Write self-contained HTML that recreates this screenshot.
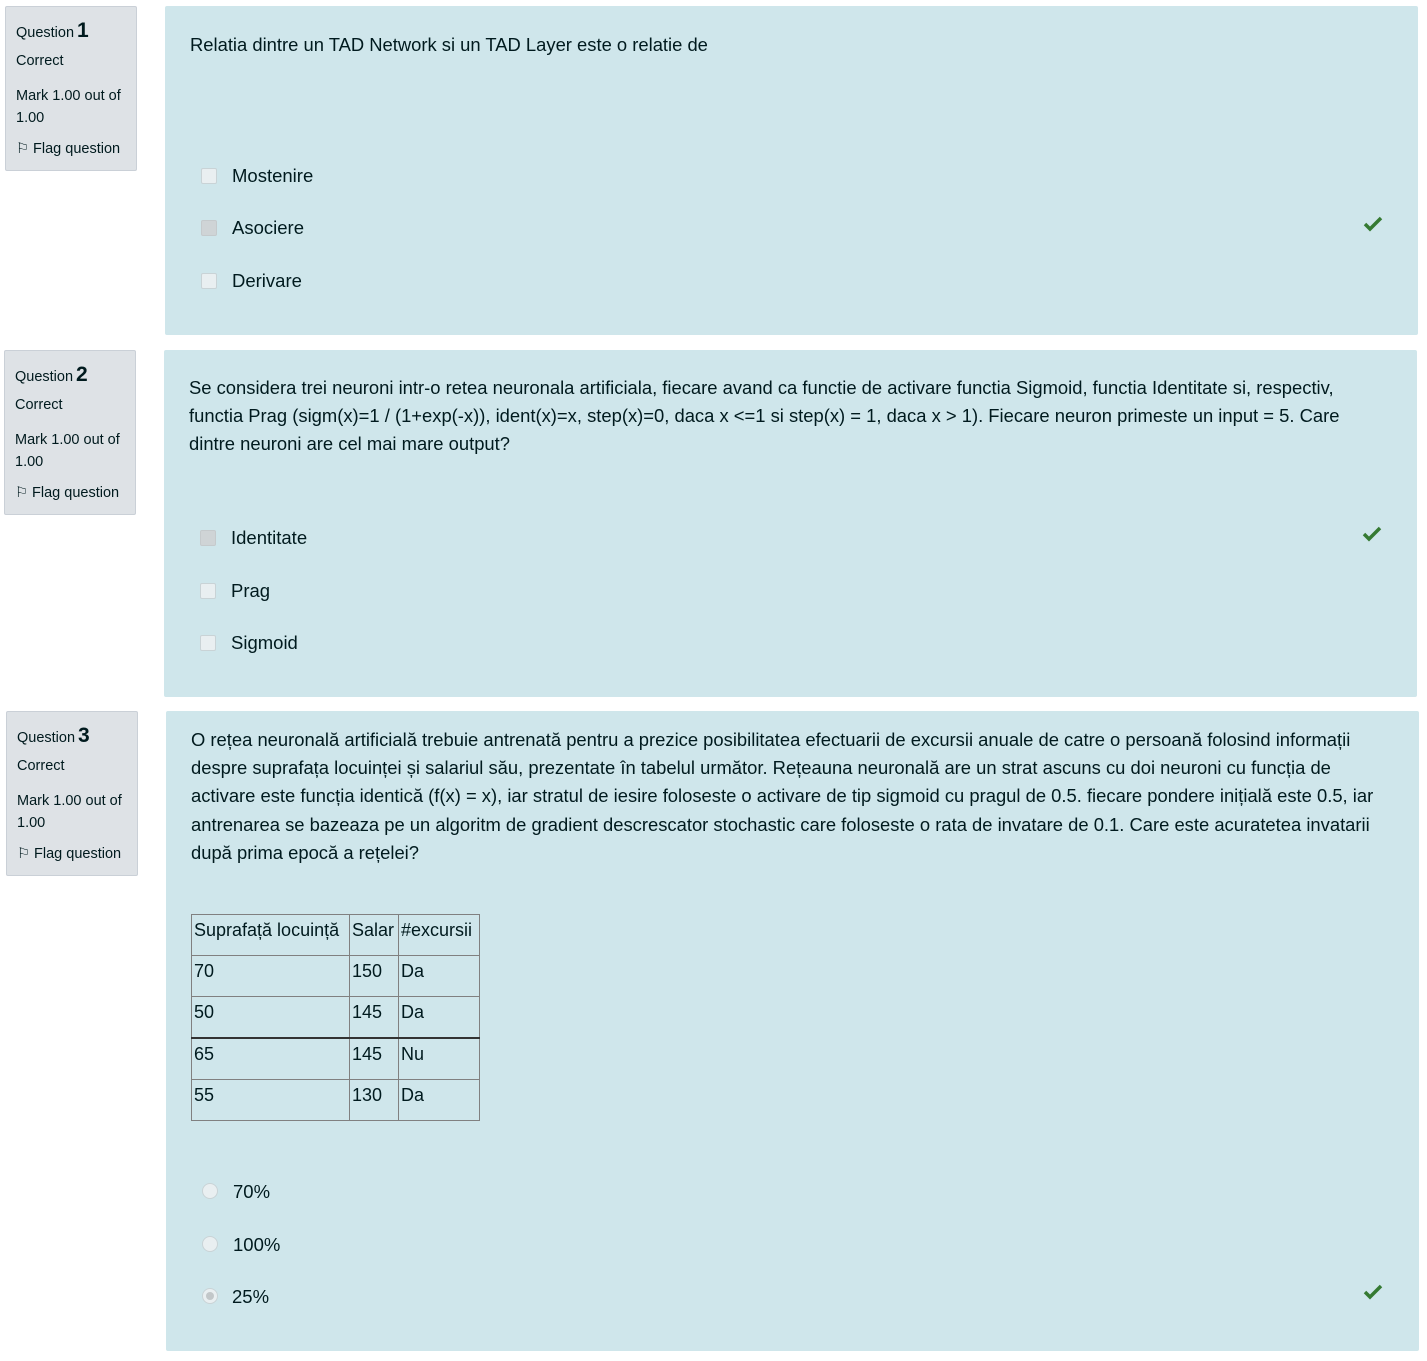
<!DOCTYPE html>
<html><head><meta charset="utf-8"><style>
body{margin:0;width:1427px;height:1361px;background:#fff;position:relative;overflow:hidden;font-family:"Liberation Sans",sans-serif;color:#001a1e}
.info{position:absolute;width:132px;height:165px;background:#dee2e6;border:1px solid #cad0d7;border-radius:2px;font-size:14.5px;box-sizing:border-box;padding:0 10px;color:#001a1e}
.info .q{position:absolute;left:10px;top:12px;font-size:14.5px}
.info .q b{font-size:21px;font-weight:bold;margin-left:3px}
.info .c{position:absolute;left:10px;top:46px}
.info .m{position:absolute;left:10px;top:78px;line-height:22px}
.info .f{position:absolute;left:10px;top:134px}
.box{position:absolute;background:#cfe6eb;border-radius:2px}
.t{position:absolute;font-size:18.4px;line-height:28.2px;white-space:nowrap}
.opt{position:absolute;font-size:18.5px;white-space:nowrap}
.cb{position:absolute;width:14px;height:14px;border:1px solid #c9d3d6;background:#e9eff1;border-radius:2px}
.cb.on{background:#cfd4d6;border-color:#c5cacc}
.rb{position:absolute;width:14px;height:14px;border:1px solid #c9d3d6;background:#e9eff1;border-radius:50%}
.rb.on::after{content:"";position:absolute;left:3px;top:3px;width:8px;height:8px;border-radius:50%;background:#c2c7c9}
.ok{position:absolute;width:20px;height:16px}
table{position:absolute;border-collapse:collapse;font-size:18px}
td{border:1px solid #808080;height:40px;padding:0 2px;vertical-align:top;line-height:30px}
</style></head><body>

<div class="info" style="left:5px;top:6px"><div class="q">Question<b>1</b></div><div class="c">Correct</div><div class="m">Mark 1.00 out of<br>1.00</div><div class="f">⚐ Flag question</div></div>
<div class="box" style="left:165px;top:6px;width:1253px;height:329px">
<div class="t" style="left:25px;top:25px">Relatia dintre un TAD Network si un TAD Layer este o relatie de</div>
<div class="cb" style="left:36px;top:162px"></div><div class="opt" style="left:67px;top:159px">Mostenire</div>
<div class="cb on" style="left:36px;top:214px"></div><div class="opt" style="left:67px;top:211px">Asociere</div>
<div class="cb" style="left:36px;top:267px"></div><div class="opt" style="left:67px;top:264px">Derivare</div>
<svg class="ok" style="left:1198px;top:210px" viewBox="0 0 20 16"><path d="M2 8l5 5L18 2" stroke="#357a32" stroke-width="3.5" fill="none"/></svg>
</div>

<div class="info" style="left:4px;top:350px"><div class="q">Question<b>2</b></div><div class="c">Correct</div><div class="m">Mark 1.00 out of<br>1.00</div><div class="f">⚐ Flag question</div></div>
<div class="box" style="left:164px;top:350px;width:1253px;height:347px">
<div class="t" style="left:25px;top:24px">Se considera trei neuroni intr-o retea neuronala artificiala, fiecare avand ca functie de activare functia Sigmoid, functia Identitate si, respectiv,<br>functia Prag (sigm(x)=1 / (1+exp(-x)), ident(x)=x, step(x)=0, daca x &lt;=1 si step(x) = 1, daca x &gt; 1). Fiecare neuron primeste un input = 5. Care<br>dintre neuroni are cel mai mare output?</div>
<div class="cb on" style="left:36px;top:180px"></div><div class="opt" style="left:67px;top:177px">Identitate</div>
<div class="cb" style="left:36px;top:233px"></div><div class="opt" style="left:67px;top:230px">Prag</div>
<div class="cb" style="left:36px;top:285px"></div><div class="opt" style="left:67px;top:282px">Sigmoid</div>
<svg class="ok" style="left:1198px;top:176px" viewBox="0 0 20 16"><path d="M2 8l5 5L18 2" stroke="#357a32" stroke-width="3.5" fill="none"/></svg>
</div>

<div class="info" style="left:6px;top:711px"><div class="q">Question<b>3</b></div><div class="c">Correct</div><div class="m">Mark 1.00 out of<br>1.00</div><div class="f">⚐ Flag question</div></div>
<div class="box" style="left:166px;top:711px;width:1253px;height:640px">
<div class="t" style="left:25px;top:15px">O rețea neuronală artificială trebuie antrenată pentru a prezice posibilitatea efectuarii de excursii anuale de catre o persoană folosind informații<br>despre suprafața locuinței și salariul său, prezentate în tabelul următor. Rețeauna neuronală are un strat ascuns cu doi neuroni cu funcția de<br>activare este funcția identică (f(x) = x), iar stratul de iesire foloseste o activare de tip sigmoid cu pragul de 0.5. fiecare pondere inițială este 0.5, iar<br>antrenarea se bazeaza pe un algoritm de gradient descrescator stochastic care foloseste o rata de invatare de 0.1. Care este acuratetea invatarii<br>după prima epocă a rețelei?</div>
<table style="left:25px;top:203px">
<tr><td style="width:153px">Suprafață locuință</td><td style="width:44px">Salar</td><td style="width:76px">#excursii</td></tr>
<tr><td>70</td><td>150</td><td>Da</td></tr>
<tr><td>50</td><td>145</td><td>Da</td></tr>
<tr style="border-top:2px solid #333"><td>65</td><td>145</td><td>Nu</td></tr>
<tr><td>55</td><td>130</td><td>Da</td></tr>
</table>
<div class="rb" style="left:36px;top:472px"></div><div class="opt" style="left:67px;top:470px">70%</div>
<div class="rb" style="left:36px;top:525px"></div><div class="opt" style="left:67px;top:523px">100%</div>
<div class="rb on" style="left:36px;top:577px"></div><div class="opt" style="left:66px;top:575px">25%</div>
<svg class="ok" style="left:1197px;top:573px" viewBox="0 0 20 16"><path d="M2 8l5 5L18 2" stroke="#357a32" stroke-width="3.5" fill="none"/></svg>
</div>
</body></html>
